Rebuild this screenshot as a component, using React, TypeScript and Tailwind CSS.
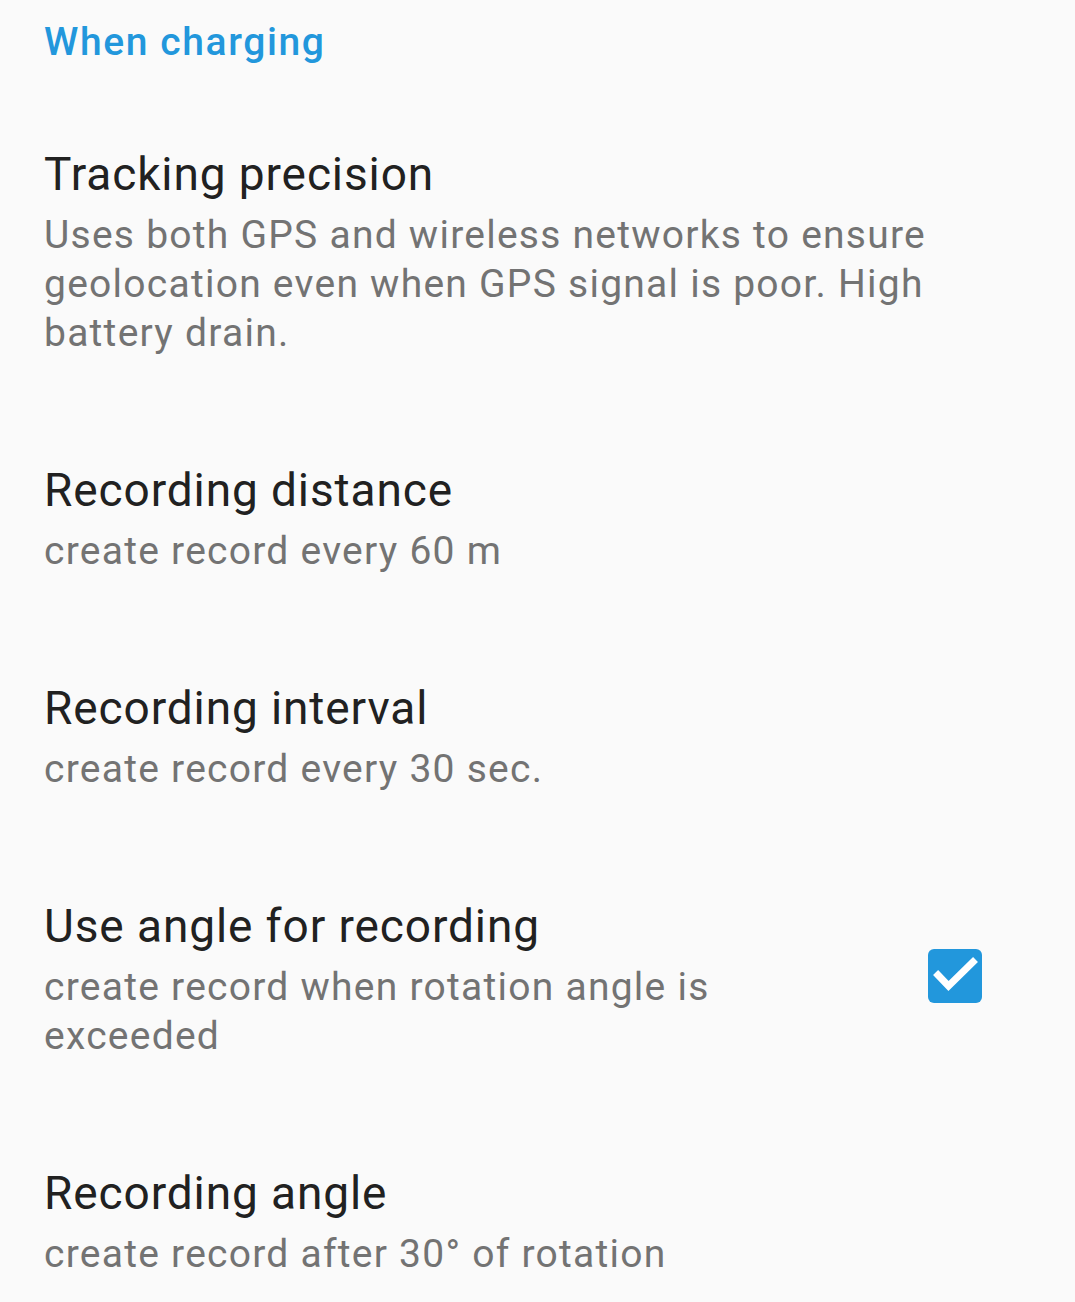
import React from "react";

type Item = { title: string; summary: string; checked?: boolean };

const items: Item[] = [
  {
    title: "Tracking precision",
    summary:
      "Uses both GPS and wireless networks to ensure geolocation even when GPS signal is poor. High battery drain.",
  },
  { title: "Recording distance", summary: "create record every 60 m" },
  { title: "Recording interval", summary: "create record every 30 sec." },
  {
    title: "Use angle for recording",
    summary: "create record when rotation angle is exceeded",
    checked: true,
  },
  { title: "Recording angle", summary: "create record after 30° of rotation" },
];

function Check() {
  return (
    <div className="w-[54px] h-[54px] rounded-[6px] bg-[#2297dc] shrink-0">
      <svg width="54" height="54" viewBox="0 0 54 54">
        <path
          d="M10 26 L20.5 37 L45 13"
          fill="none"
          stroke="#ffffff"
          strokeWidth="7"
          strokeLinecap="square"
          strokeLinejoin="miter"
        />
      </svg>
    </div>
  );
}

export default function App() {
  return (
    <div
      className="w-[1075px] h-[1302px] overflow-hidden bg-[#fafafa]"
      style={{ fontFamily: "Roboto, 'Noto Sans', sans-serif" }}
    >
      <div className="pl-[44px] pt-[18px] pb-[28px]">
        <div className="text-[39px] leading-[48px] font-medium tracking-[1.6px] text-[#2297dc]">
          When charging
        </div>
      </div>
      {items.map((it) => (
        <div
          key={it.title}
          className="flex items-center pl-[44px] pr-[93px] pt-[54px] pb-[52px]"
        >
          <div className={it.checked ? "w-[840px]" : "flex-1"}>
            <div className="text-[46px] leading-[52px] tracking-[0.9px] text-[#212121]">
              {it.title}
            </div>
            <div className="mt-[11px] text-[39px] leading-[49px] tracking-[1.25px] text-[#737373]">
              {it.summary}
            </div>
          </div>
          {it.checked && (
            <div className="ml-auto mt-[-10px]">
              <Check />
            </div>
          )}
        </div>
      ))}
    </div>
  );
}
